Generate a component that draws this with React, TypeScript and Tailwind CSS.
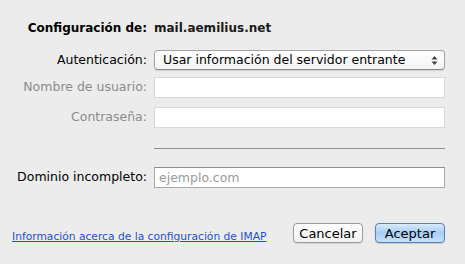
import { useState } from 'react'

const font = { fontFamily: '"DejaVu Sans", "Liberation Sans", sans-serif' }

function Field({ placeholder, disabled }: { placeholder?: string; disabled?: boolean }) {
  return (
    <input
      disabled={disabled}
      placeholder={placeholder}
      className={`h-[21px] w-[291px] border px-[4px] text-[12.5px] text-black outline-none placeholder:text-[#9a9a9a] ${
        disabled ? 'border-[#d8d8d8] bg-white' : 'border-[#a9a9a9] border-t-[#8e8e8e] bg-white'
      }`}
    />
  )
}

export default function App() {
  const [auth] = useState('Usar información del servidor entrante')

  return (
    <div className="h-[264px] w-[465px] bg-[#ececec] text-[12.5px] text-black" style={font}>
      <div className="grid grid-cols-[147px_291px] items-center gap-x-[7px] pt-[18px]">
        <div className="h-[20px] text-right text-[12px] font-bold leading-[20px]">Configuración de:</div>
        <div className="h-[20px] text-[12px] font-bold leading-[20px] text-[#1a1a1a]">mail.aemilius.net</div>

        <div className="mt-[12px] text-right">Autenticación:</div>
        <div className="mt-[12px] flex h-[20px] items-center justify-between rounded-[4px] border border-[#a3a3a3] border-b-[#8a8a8a] bg-gradient-to-b from-white to-[#f4f4f4] pl-[8px] pr-[6px] shadow-[0_1px_1px_rgba(0,0,0,0.12)]">
          <span>{auth}</span>
          <svg width="7" height="11" viewBox="0 0 7 11">
            <path d="M3.5 1 L6.5 4.5 H0.5 Z" fill="#444" />
            <path d="M3.5 10 L6.5 6.5 H0.5 Z" fill="#444" />
          </svg>
        </div>

        <div className="mt-[7px] text-right text-[#8b8b8b]">Nombre de usuario:</div>
        <div className="mt-[7px]">
          <Field disabled />
        </div>

        <div className="mt-[9px] text-right text-[#8b8b8b]">Contraseña:</div>
        <div className="mt-[9px]">
          <Field disabled />
        </div>

        <div />
        <div className="mt-[20px] h-px bg-[#8f8f8f]" />

        <div className="mt-[18px] text-right">Dominio incompleto:</div>
        <div className="mt-[18px]">
          <Field placeholder="ejemplo.com" />
        </div>
      </div>

      <div className="mt-[35px] flex h-[20px] items-center pl-[12px] pr-[20px]">
        <a href="#" className="whitespace-nowrap pt-[8px] text-[10.7px] text-[#1d4fd6] underline">
          Información acerca de la configuración de IMAP
        </a>
        <div className="ml-auto flex gap-[12px]">
          <button className="h-[20px] w-[70px] rounded-[4px] border border-[#9c9c9c] bg-gradient-to-b from-white to-[#f1f1f1] text-[13px] shadow-[0_1px_1px_rgba(0,0,0,0.12)]">
            Cancelar
          </button>
          <button className="h-[20px] w-[70px] rounded-[4px] border border-[#5b7fb4] bg-gradient-to-b from-[#d9eafc] via-[#a8cdf5] to-[#c8e2fb] text-[13px] shadow-[0_1px_1px_rgba(0,0,0,0.15)]">
            Aceptar
          </button>
        </div>
      </div>
    </div>
  )
}
